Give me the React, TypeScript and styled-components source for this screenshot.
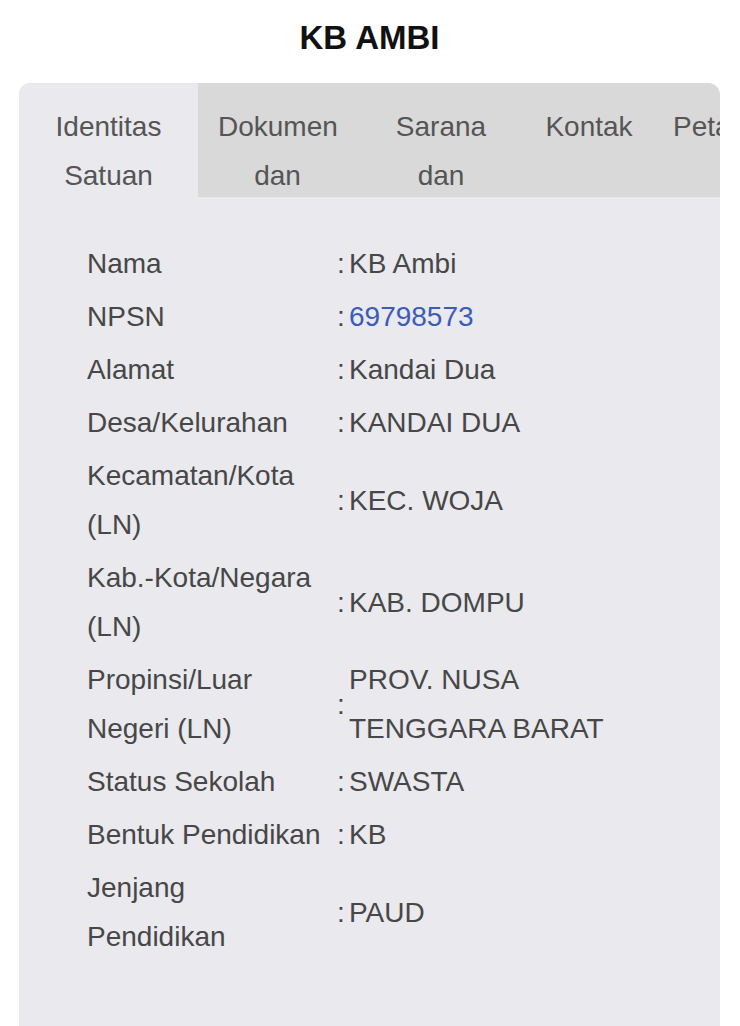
import styled, { createGlobalStyle } from 'styled-components';

const GlobalStyle = createGlobalStyle`
  html, body {
    margin: 0;
    padding: 0;
    background: #ffffff;
  }
  body {
    font-family: "Liberation Sans", Arial, Helvetica, sans-serif;
  }
`;

const Page = styled.div`
  width: 740px;
  padding: 0 20px 0 19px;
  box-sizing: border-box;
`;

const Title = styled.h1`
  margin: 0;
  height: 83px;
  display: flex;
  align-items: center;
  justify-content: center;
  padding-bottom: 7px;
  box-sizing: border-box;
  font-size: 33px;
  font-weight: 700;
  color: #111111;
`;

const Card = styled.div`
  background: #e9e9ee;
  border-radius: 12px 12px 0 0;
  overflow: hidden;
  padding-bottom: 120px;
`;

const TabStrip = styled.div`
  display: flex;
  height: 114px;
  background: #d9d9d9;
  overflow: hidden;
`;

const Tab = styled.div<{ $active?: boolean; $width?: number }>`
  flex: 0 0 auto;
  width: ${({ $width }) => ($width ? `${$width}px` : 'auto')};
  padding: 19px 20px 0 20px;
  box-sizing: border-box;
  height: 114px;
  background: ${({ $active }) => ($active ? '#e9e9ee' : 'transparent')};
  color: #555555;
  font-size: 28px;
  line-height: 49px;
  text-align: center;
`;

const InfoTable = styled.div`
  display: grid;
  grid-template-columns: 250px 12px 280px;
  padding: 40px 0 0 68px;
  color: #474747;
  font-size: 28px;
  line-height: 49px;
`;

const Row = styled.div`
  display: contents;
`;

const Cell = styled.div`
  padding: 2px 0;
  display: flex;
  align-items: center;
`;

const Label = styled(Cell)`
  padding-right: 10px;
`;

const Colon = styled(Cell)`
  justify-content: flex-start;
`;

const Value = styled(Cell)<{ $link?: boolean }>`
  color: ${({ $link }) => ($link ? '#3b5cb8' : '#474747')};
`;

const tabs = [
  { text: 'Identitas Satuan', width: 179, active: true },
  { text: 'Dokumen dan', width: 159 },
  { text: 'Sarana dan', width: 168 },
  { text: 'Kontak', width: 128 },
  { text: 'Peta' },
];

const rows: { label: string; value: string; link?: boolean }[] = [
  { label: 'Nama', value: 'KB Ambi' },
  { label: 'NPSN', value: '69798573', link: true },
  { label: 'Alamat', value: 'Kandai Dua' },
  { label: 'Desa/Kelurahan', value: 'KANDAI DUA' },
  { label: 'Kecamatan/Kota (LN)', value: 'KEC. WOJA' },
  { label: 'Kab.-Kota/Negara (LN)', value: 'KAB. DOMPU' },
  { label: 'Propinsi/Luar Negeri (LN)', value: 'PROV. NUSA TENGGARA BARAT' },
  { label: 'Status Sekolah', value: 'SWASTA' },
  { label: 'Bentuk Pendidikan', value: 'KB' },
  { label: 'Jenjang Pendidikan', value: 'PAUD' },
];

export default function App() {
  return (
    <>
      <GlobalStyle />
      <Page>
        <Title>KB AMBI</Title>
        <Card>
          <TabStrip>
            {tabs.map((t) => (
              <Tab key={t.text} $active={t.active} $width={t.width}>
                {t.text}
              </Tab>
            ))}
          </TabStrip>
          <InfoTable>
            {rows.map((r) => (
              <Row key={r.label}>
                <Label>{r.label}</Label>
                <Colon>:</Colon>
                <Value $link={r.link}>{r.value}</Value>
              </Row>
            ))}
          </InfoTable>
        </Card>
      </Page>
    </>
  );
}
